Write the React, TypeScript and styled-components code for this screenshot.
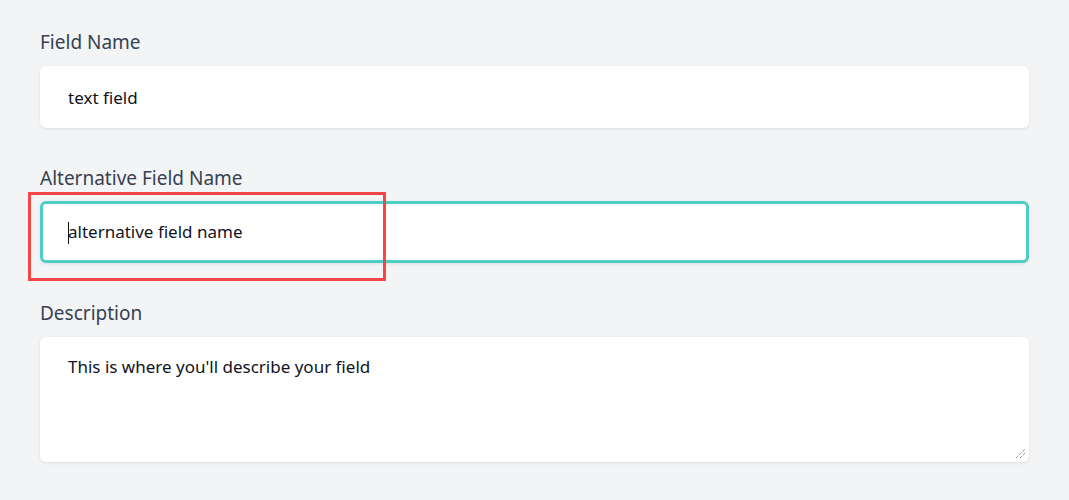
import React from "react";
import styled, { createGlobalStyle } from "styled-components";

const Global = createGlobalStyle`
  html, body { margin: 0; padding: 0; background: #f3f4f6; }
  body { font-family: "Noto Sans", "Open Sans", sans-serif; }
  * { box-sizing: border-box; }
`;

const Page = styled.div`
  padding: 30px 40px 0 40px;
  width: 1069px;
  height: 500px;
  display: flex;
  flex-direction: column;
  gap: 38px;
`;

const Field = styled.div<{ $tight?: boolean }>`
  position: relative;
  display: flex;
  flex-direction: column;
  gap: ${(p) => (p.$tight ? "11px" : "12px")};
  width: 989px;
`;

const Label = styled.label`
  font-size: 19px;
  line-height: 24px;
  color: #374151;
`;

const Input = styled.div<{ $focused?: boolean }>`
  height: ${(p) => (p.$focused ? "62px" : "62px")};
  background: #fff;
  border-radius: 6px;
  border: ${(p) => (p.$focused ? "3px solid #4ecdc4" : "none")};
  box-shadow: 0 1px 4px rgba(0, 0, 0, 0.06), 0 1px 2px rgba(0, 0, 0, 0.04);
  padding: 0 ${(p) => (p.$focused ? "25px" : "28px")};
  display: flex;
  align-items: center;
  font-size: 17px;
  color: #111322;
`;

const TextArea = styled.div`
  position: relative;
  height: 125px;
  background: #fff;
  border-radius: 6px;
  box-shadow: 0 1px 4px rgba(0, 0, 0, 0.06), 0 1px 2px rgba(0, 0, 0, 0.04);
  padding: 18px 28px;
  font-size: 17px;
  line-height: 24px;
  color: #111322;
`;

const Caret = styled.span`
  display: inline-block;
  width: 1px;
  height: 22px;
  background: #111;
  margin-right: -1px;
  vertical-align: middle;
`;

const Grip = styled.svg`
  position: absolute;
  right: 3px;
  bottom: 3px;
`;

const Highlight = styled.div`
  position: absolute;
  left: -12px;
  top: 26px;
  width: 358px;
  height: 89px;
  border: 3px solid #f44647;
  pointer-events: none;
`;

export default function App() {
  return (
    <>
      <Global />
      <Page>
        <Field>
          <Label>Field Name</Label>
          <Input>text field</Input>
        </Field>
        <Field $tight>
          <Label>Alternative Field Name</Label>
          <Input $focused>
            <span>
              <Caret />
              alternative field name
            </span>
          </Input>
          <Highlight />
        </Field>
        <Field>
          <Label>Description</Label>
          <TextArea>
            This is where you'll describe your field
            <Grip width="11" height="11" viewBox="0 0 11 11">
              <path d="M1 10 L10 1 M5 10 L10 5" stroke="#666" strokeWidth="1" strokeDasharray="1 1" fill="none" />
            </Grip>
          </TextArea>
        </Field>
      </Page>
    </>
  );
}
